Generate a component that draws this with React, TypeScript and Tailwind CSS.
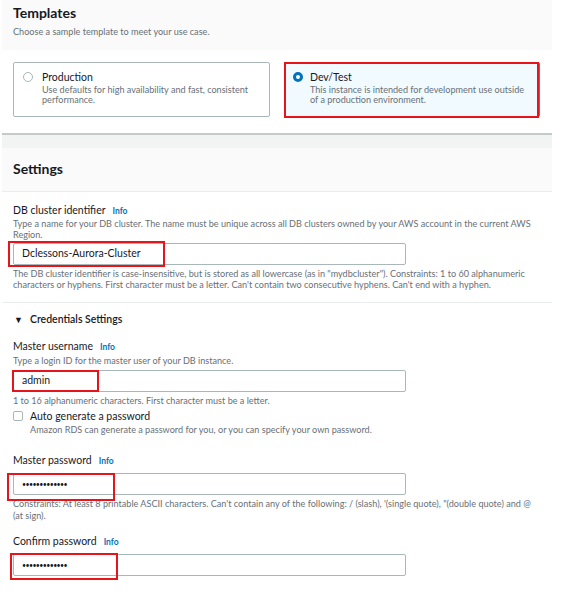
import { ReactNode } from "react";

// red annotation box drawn over a field
const Mark = ({ className }: { className: string }) => (
  <div className={`absolute border-2 border-[#e8141c] pointer-events-none ${className}`} />
);

const Label = ({ text }: { text: string }) => (
  <div className="flex items-baseline gap-[7px] text-[10.5px] leading-[13px] text-[#16191f]">
    <span>{text}</span>
    <span className="text-[8.5px] font-bold text-[#0073bb]">Info</span>
  </div>
);

const Hint = ({ children, className = "" }: { children: ReactNode; className?: string }) => (
  <p className={`text-[9.1px] leading-[11px] text-[#687078] ${className}`}>{children}</p>
);

const Field = ({ value, mark, password }: { value: string; mark: string; password?: boolean }) => (
  <div className="relative w-[393px] h-[22px] border border-[#aab7b8] rounded-[2px] flex items-center pl-[8px]">
    <span
      className={
        password
          ? "text-[7px] tracking-[-0.6px] text-[#16191f]"
          : "text-[10.5px] text-[#16191f]"
      }
    >
      {value}
    </span>
    <Mark className={mark} />
  </div>
);

export default function App() {
  return (
    <div
      className="w-[578px] h-[616px] bg-white overflow-hidden"
      style={{ fontFamily: "Lato, 'Open Sans', sans-serif" }}
    >
      <div className="ml-[2px] w-[550px]">
        {/* Templates */}
        <div className="h-[50px] bg-[#fafafa] px-[11px] pt-[4px]">
          <h2 className="text-[14px] leading-[18px] font-bold text-[#16191f]">Templates</h2>
          <p className="mt-[4px] text-[9.1px] leading-[11px] text-[#687078]">
            Choose a sample template to meet your use case.
          </p>
        </div>
        <div className="h-[83px] bg-white px-[11px] pt-[12px] flex gap-[14px]">
          <div className="w-[257px] h-[55px] border border-[#aab7b8] rounded-[2px] flex gap-[9px] pl-[9px] pt-[8px]">
            <span className="mt-[1px] w-[10px] h-[10px] rounded-full border border-[#aab7b8] bg-white shrink-0" />
            <div>
              <div className="text-[10.5px] leading-[13px] text-[#16191f]">Production</div>
              <div className="text-[9.1px] leading-[10px] text-[#687078] mt-[1px] pr-[12px]">
                Use defaults for high availability and fast, consistent performance.
              </div>
            </div>
          </div>
          <div className="relative w-[256px] h-[55px] border border-[#00a1c9] bg-[#f1faff] rounded-[2px] flex gap-[7px] pl-[8px] pt-[8px]">
            <span className="mt-[1px] w-[10px] h-[10px] rounded-full border-[3px] border-[#0073bb] bg-white shrink-0" />
            <div>
              <div className="text-[10.5px] leading-[13px] text-[#16191f]">Dev/Test</div>
              <div className="text-[9.1px] leading-[10px] text-[#687078] mt-[1px] pr-[8px]">
                This instance is intended for development use outside of a production environment.
              </div>
            </div>
            <Mark className="-left-[1px] -top-[1px] w-[255px] h-[56px]" />
          </div>
        </div>
        <div className="h-[2px] bg-[#c4c9c9]" />
        <div className="h-[13px] bg-[#f2f3f3]" />

        {/* Settings */}
        <div className="h-[44px] bg-[#fafafa] border-b border-[#eaeded] px-[11px] flex items-center pb-[3px]">
          <h2 className="text-[14px] font-bold text-[#16191f]">Settings</h2>
        </div>
        <div className="px-[11px] pt-[12px]">
          <Label text="DB cluster identifier" />
          <Hint>
            Type a name for your DB cluster. The name must be unique across all DB clusters owned by your AWS
            account in the current AWS Region.
          </Hint>
          <div className="mt-[3px]">
            <Field value="Dclessons-Aurora-Cluster" mark="-left-[6px] -top-[3px] w-[157px] h-[26px]" />
          </div>
          <Hint className="mt-[3px] pr-[10px]">
            The DB cluster identifier is case-insensitive, but is stored as all lowercase (as in "mydbcluster").
            Constraints: 1 to 60 alphanumeric characters or hyphens. First character must be a letter. Can't contain
            two consecutive hyphens. Can't end with a hyphen.
          </Hint>
        </div>
        <div className="mt-[12px] h-px bg-[#eaeded]" />
        <div className="px-[11px] pt-[10px]">
          <div className="flex items-center gap-[7px] text-[10.5px] leading-[13px] font-semibold text-[#16191f]">
            <span className="text-[9px] ml-[1px]">▼</span>
            <span>Credentials Settings</span>
          </div>

          <div className="mt-[14px]">
            <Label text="Master username" />
          </div>
          <Hint className="mt-[1px]">Type a login ID for the master user of your DB instance.</Hint>
          <div className="mt-[4px]">
            <Field value="admin" mark="-left-[2px] -top-[1px] w-[87px] h-[22px]" />
          </div>
          <Hint className="mt-[3px]">1 to 16 alphanumeric characters. First character must be a letter.</Hint>
          <div className="mt-[4px] flex gap-[7px]">
            <span className="mt-[1px] w-[10px] h-[10px] border border-[#aab7b8] rounded-[2px] bg-white shrink-0" />
            <div>
              <div className="text-[10.5px] leading-[13px] text-[#16191f]">Auto generate a password</div>
              <Hint className="mt-[1px]">
                Amazon RDS can generate a password for you, or you can specify your own password.
              </Hint>
            </div>
          </div>

          <div className="mt-[19px]">
            <Label text="Master password" />
          </div>
          <div className="mt-[5px]">
            <Field value="•••••••••••••" password mark="-left-[7px] -top-[1px] w-[108px] h-[28px]" />
          </div>
          <Hint className="mt-[3px] leading-[12px] pr-[6px]">
            Constraints: At least 8 printable ASCII characters. Can't contain any of the following: / (slash),
            '(single quote), "(double quote) and @ (at sign).
          </Hint>

          <div className="mt-[13px]">
            <Label text="Confirm password" />
          </div>
          <div className="mt-[5px]">
            <Field value="•••••••••••••" password mark="-left-[4px] -top-[2px] w-[108px] h-[27px]" />
          </div>
        </div>
      </div>
    </div>
  );
}
